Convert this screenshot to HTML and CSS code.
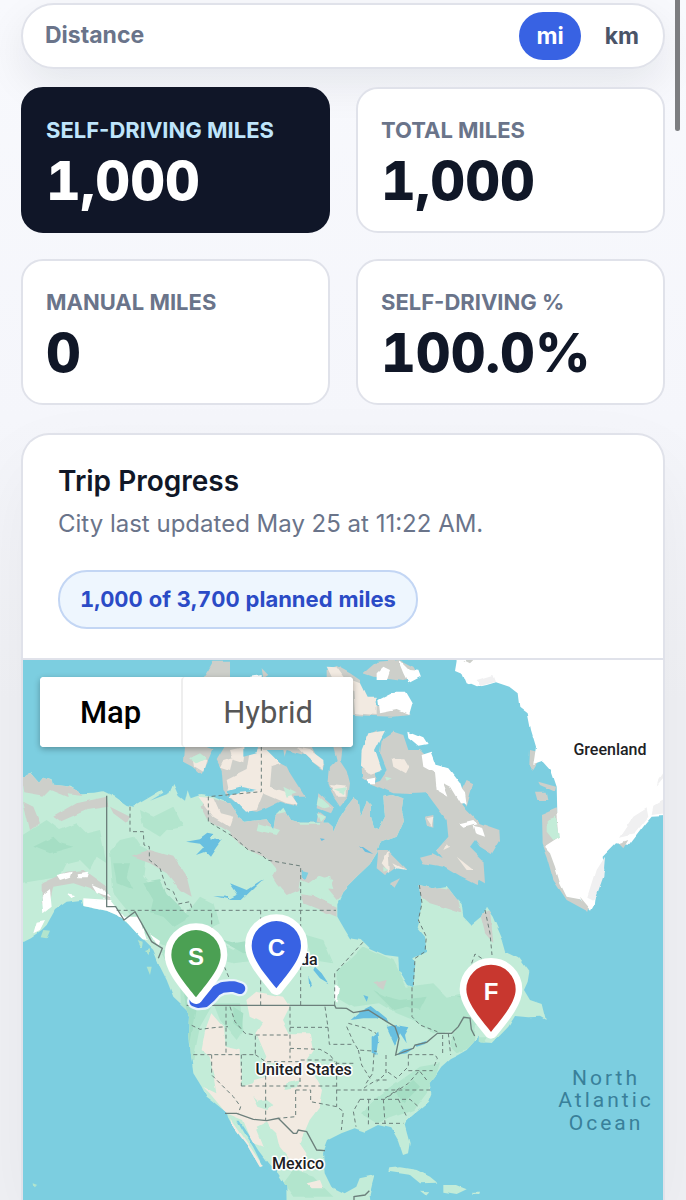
FILE: index.html
```html
<!DOCTYPE html>
<html lang="en">
<head>
<meta charset="utf-8">
<meta name="viewport" content="width=device-width, initial-scale=1">
<title>Trip Progress</title>
<link rel="stylesheet" href="styles.css">
</head>
<body>
<main class="page">
  <section class="units" aria-label="Distance units">
    <span class="units-label">Distance</span>
    <div class="units-toggle">
      <button class="unit unit-active" type="button" aria-pressed="true">mi</button>
      <button class="unit" type="button" aria-pressed="false">km</button>
    </div>
  </section>

  <section class="stats" aria-label="Mileage">
    <article class="stat stat-dark"><h2 class="stat-label">Self-driving miles</h2><p class="stat-value">1,000</p></article>
    <article class="stat"><h2 class="stat-label">Total miles</h2><p class="stat-value">1,000</p></article>
    <article class="stat"><h2 class="stat-label">Manual miles</h2><p class="stat-value">0</p></article>
    <article class="stat"><h2 class="stat-label">Self-driving %</h2><p class="stat-value">100.0%</p></article>
  </section>

  <section class="trip">
    <header class="trip-head">
      <h1 class="trip-title">Trip Progress</h1>
      <p class="trip-sub">City last updated May 25 at 11:22 AM.</p>
      <p class="trip-chip">1,000 of 3,700 planned miles</p>
    </header>
    <div class="map">
      <svg class="map-art" viewBox="69 30 1920 1620" preserveAspectRatio="xMidYMin slice" role="img" aria-label="Route map of North America">
        <defs>
          <filter id="rough" x="0" y="0" width="100%" height="100%">
            <feTurbulence type="fractalNoise" baseFrequency="0.02" numOctaves="2" seed="4" result="n"/>
            <feDisplacementMap in="SourceGraphic" in2="n" scale="11" xChannelSelector="R" yChannelSelector="G"/>
          </filter>
          <clipPath id="landclip"><use href="#mainland"/></clipPath>
          <path id="mainland" d="M40 400 95 367 120 395 132 380 155 388 158 404 215 410 245 430 285 428 310 424 345 440 380 465 400 470 440 447 485 420 490 428 450 452 508 430 520 402 536 438 555 452 563 418 572 445 600 435 640 440 690 462 715 500 735 515 800 508 820 540 826 500 850 476 870 510 900 518 985 518 998 530 1000 545 1018 505 1040 470 1060 445 1076 455 1082 500 1095 470 1100 452 1112 465 1113 500 1122 530 1136 538 1155 500 1150 440 1175 435 1210 445 1205 480 1212 510 1190 560 1140 578 1130 610 1110 642 1070 680 1030 720 1012 760 1012 800 1035 840 1050 865 1085 870 1110 895 1155 915 1195 920 1197 960 1224 1005 1240 1012 1246 940 1240 925 1279 905 1275 860 1250 830 1262 780 1266 740 1258 705 1300 715 1340 708 1368 745 1385 762 1390 800 1413 825 1443 800 1458 770 1478 800 1508 870 1518 905 1558 925 1588 965 1583 995 1572 1020 1590 1050 1625 1062 1637 1110 1620 1100 1585 1102 1545 1098 1525 1130 1475 1182 1440 1180 1436 1160 1400 1200 1374 1215 1349 1228 1324 1250 1304 1280 1288 1300 1294 1330 1284 1355 1254 1380 1219 1410 1214 1425 1229 1480 1224 1510 1209 1515 1194 1470 1174 1435 1134 1425 1094 1445 1064 1435 1024 1450 984 1470 969 1510 974 1570 994 1610 1034 1630 1069 1610 1079 1585 1124 1575 1116 1605 1109 1635 1114 1680 860 1680 859 1610 834 1570 804 1540 774 1500 744 1450 719 1412 712 1412 734 1450 759 1490 788 1548 780 1552 744 1490 700 1432 684 1402 680 1388 640 1355 620 1340 605 1310 580 1270 572 1210 568 1150 570 1100 560 1078 520 1040 500 990 480 950 460 900 420 860 385 822 350 795 320 782 250 768 245 750 200 755 165 780 140 825 125 840 90 865 69 875 40 880Z"/>
          <path id="pin" d="M0 93C-27 58-74 8-74-35A74 74 0 0 1 74-35C74 8 27 58 0 93Z"/>
        </defs>
        <rect class="sea" x="0" y="0" width="2100" height="1700"/>

        <g filter="url(#rough)">
          <rect x="0" y="0" width="2100" height="1700" fill="none"/>
          <use href="#mainland" class="green"/>
          <g clip-path="url(#landclip)">
            <!-- forest shading -->
            <g class="forest">
              <path d="M60 560 140 510 180 540 230 520 260 550 300 540 320 640 290 620 270 660 240 630 200 640 180 680 120 690 60 700ZM330 600 360 570 400 560 420 590 440 600 430 680 480 740 560 790 600 740 640 760 660 820 600 850 700 900 740 870 790 870 860 910 830 960 780 930 700 940 660 930 620 960 520 900 430 850 380 780 340 730ZM480 900 600 900 620 950 640 990 620 1020 640 1060 600 1130 580 1230 550 1240 540 1000ZM640 1060 720 1060 730 1140 710 1170 660 1110ZM1010 960 1050 930 1090 890 1180 930 1220 1010 1300 1000 1340 1040 1390 1030 1420 1010 1480 1020 1540 1060 1480 1110 1380 1140 1300 1150 1240 1110 1190 1090 1140 1060 1060 1070 1010 1040ZM1120 1350 1190 1300 1260 1250 1320 1240 1300 1300 1240 1380 1130 1420 1080 1390ZM1360 1150 1430 1110 1420 1190 1370 1210 1350 1190ZM420 480 460 500 520 470 550 530 500 540 480 560 430 530ZM900 850 970 870 1000 940 940 930ZM880 1560 940 1580 1000 1640 880 1640 850 1600Z"/>
            </g>
            <g class="forest-deep">
              <path d="M430 700 480 690 500 730 530 760 570 800 520 830 490 800 450 790 460 750ZM540 960 590 960 620 1040 590 1080 570 1180 560 1080ZM660 870 700 880 760 870 800 900 730 910ZM1120 1020 1160 1040 1200 1050 1280 1040 1260 1080 1220 1070 1180 1080ZM1190 1330 1240 1290 1260 1310 1210 1360ZM100 590 160 560 180 580 220 590 150 610ZM340 640 390 640 380 680 400 720 350 700ZM700 1070 730 1090 725 1140 700 1120ZM1370 1040 1450 1020 1430 1050Z"/>
            </g>
            <!-- barren ground -->
            <path class="gray" d="M700 465 735 515 900 480 1010 440 1230 420 1220 560 1140 620 1070 680 1020 740 1010 750 985 720 1000 690 960 675 925 700 900 690 895 720 860 735 830 700 818 680 830 660 800 625 745 600 700 565 684 545 625 510 605 470 620 440Z"/>
            <path class="gray" d="M900 730 940 735 1010 770 1010 800 960 780 910 760ZM60 370 130 370 165 400 240 420 250 435 200 440 150 420 130 440 70 430ZM160 500 230 460 320 440 325 470 260 480 180 515ZM70 455 100 470 120 520 90 540ZM395 620 450 600 520 620 560 680 575 740 540 720 500 670 450 640ZM125 700 200 665 250 660 320 710 330 760 280 720 220 700 160 710 145 780 125 760ZM330 470 390 500 380 520 340 490ZM1250 700 1368 720 1384 790 1340 775 1290 760 1265 740ZM1440 790 1470 780 1480 880 1455 850ZM1120 1000 1160 990 1150 1020Z"/>
            <path class="green" d="M940 690 990 675 1000 720 950 715ZM775 520 840 540 830 555 770 540ZM890 515 960 518 960 524 900 524ZM200 430 250 435 240 450 205 445Z"/>
            <path class="sand" d="M595 440 640 445 660 490 700 500 690 530 640 500ZM614 1150 619 1130 634 1090 669 1130 674 1190 719 1200 724 1310 759 1300 799 1220 769 1150 789 1120 749 1100 739 1050 769 1025 849 1040 869 1070 849 1110 869 1150 929 1150 939 1200 919 1230 969 1320 959 1370 929 1410 899 1480 919 1510 909 1570 879 1540 839 1490 829 1450 809 1430 769 1440 789 1490 759 1480 729 1410 679 1390 629 1330 609 1310 649 1330 639 1270 629 1220 605 1200ZM920 1600 960 1590 970 1615 935 1615ZM690 1405 715 1440 750 1490 790 1550 770 1550 700 1440Z"/>
            <path class="green" d="M760 1340 775 1355 800 1350 820 1365 805 1380 775 1370ZM770 1430 800 1415 830 1470 840 1500 800 1490ZM860 1300 900 1290 890 1315 850 1320ZM910 1480 940 1450 960 1500 930 1520ZM760 1260 790 1240 830 1235 800 1280 765 1290Z"/>
            <path class="snow" d="M125 740 150 720 155 770 130 790ZM170 675 215 665 210 680 180 690ZM230 670 265 665 260 682 232 682ZM250 745 330 750 370 800 420 800 440 870 400 860 380 815 320 785 250 770ZM110 815 135 810 120 840 100 850ZM275 705 310 720 330 745 290 730ZM1005 1005 1020 1015 1012 1055 1002 1045ZM450 850 480 870 475 890ZM200 730 225 735 215 745Z"/>
          </g>

          <!-- arctic islands -->
          <path class="gray" d="M640 32 690 32 690 90 605 90 625 60ZM555 290 590 275 640 295 620 340 605 372 580 350 552 335ZM650 330 680 280 930 285 930 320 860 300 850 330 870 370 915 440 880 440 895 470 840 455 800 475 770 485 740 480 720 465 690 445 670 420 665 360ZM785 55 805 75 790 85ZM980 60 1010 48 1050 70 1080 90 1080 170 1170 170 1230 195 1180 200 1120 198 1060 195 980 120ZM1090 70 1130 35 1200 30 1240 50 1255 75 1210 90 1170 85 1120 80ZM1000 290 1025 290 1020 330 1040 360 1050 400 1045 440 1020 470 1000 440 985 400 990 350 1010 330ZM890 290 935 290 960 340 975 345 970 362 930 330ZM955 430 1000 470 990 490 950 475ZM1085 310 1100 260 1135 240 1110 300 1130 380 1120 405 1090 385ZM1145 270 1180 245 1210 255 1225 300 1260 300 1300 340 1340 380 1370 440 1400 480 1440 520 1498 540 1500 570 1475 612 1440 590 1425 570 1410 590 1450 630 1455 700 1420 680 1380 650 1340 640 1310 600 1345 560 1340 510 1310 470 1280 430 1230 432 1180 430 1110 400 1140 390 1160 360 1140 310ZM955 485 975 500 970 520 950 515ZM1135 600 1160 600 1220 660 1190 650 1155 675 1130 655ZM1170 700 1200 685 1185 710ZM1260 620 1300 610 1340 630 1440 680 1430 705 1380 680 1330 650 1270 640ZM1275 500 1300 495 1300 530 1280 525ZM1400 390 1420 400 1400 470 1380 430Z"/>
          <path class="sand" d="M680 390 740 360 750 300 840 300 850 340 815 350 810 410 870 430 895 465 860 460 790 430 770 480 735 485 690 440ZM690 300 735 290 730 340 700 330ZM890 292 930 300 970 330 972 360 930 330ZM980 50 1010 52 1030 80 1080 100 1100 140 1130 140 1130 195 1065 190 1060 120 1000 90ZM1085 300 1105 250 1155 242 1125 300 1145 360 1110 372 1083 350ZM1175 325 1210 325 1225 350 1215 370 1180 350ZM990 405 1040 410 1040 440 1010 440ZM580 320 620 330 610 365 585 350ZM670 330 700 320 690 360 660 350ZM1280 505 1300 500 1295 528ZM1145 640 1165 600 1170 670ZM1180 640 1220 660 1190 655ZM1340 580 1350 590 1330 600ZM1370 620 1420 660 1400 660Z"/>
          <path class="green" d="M570 325 600 310 620 325 590 340ZM955 440 990 470 970 475 950 465ZM1000 420 1040 415 1035 435ZM950 490 975 500 960 515ZM1150 650 1165 660 1150 665ZM850 410 890 430 860 440ZM1155 380 1175 385 1160 392Z"/>
          <path class="snow" d="M1200 30 1230 60 1255 62 1262 80 1225 100 1210 70 1200 45ZM1130 70 1150 50 1170 60 1160 90 1130 90ZM1135 150 1185 125 1215 125 1235 160 1225 195 1190 180 1140 190ZM1222 245 1270 265 1283 285 1255 290 1225 265ZM1265 315 1295 305 1310 345 1345 355 1380 400 1400 460 1380 460 1350 410 1330 400 1345 440 1310 420 1305 370 1270 350ZM1368 395 1395 430 1400 465 1380 450ZM1378 520 1420 510 1430 520 1390 530ZM1418 525 1445 530 1455 560 1425 550ZM1100 385 1125 380 1125 400 1105 400ZM1370 30 1430 30 1430 45 1400 60ZM750 80 785 75 785 90 755 90Z"/>
          <path class="forest" d="M130 840 150 842 140 865 122 862ZM440 950 455 950 450 975ZM435 900 450 895 450 915ZM410 870 425 875 422 895ZM98 1600 112 1605 100 1612ZM1436 1165 1460 1165 1450 1182 1436 1178Z"/>
          <path class="green" d="M1168 1555 1200 1552 1250 1560 1290 1580 1312 1598 1260 1600 1230 1575 1165 1565ZM1330 1605 1368 1605 1400 1618 1370 1632 1330 1625ZM1420 1628 1440 1628 1438 1635 1420 1634ZM1260 1622 1285 1624 1275 1634Z"/>

          <!-- greenland -->
          <path class="gray" d="M1590 300 1630 310 1600 360 1588 350ZM1615 395 1668 410 1665 425 1620 405ZM1608 425 1640 425 1645 450 1615 450ZM1623 495 1670 475 1700 600 1740 750 1770 765 1765 785 1700 750 1660 690 1640 620 1625 580Z"/>
          <path class="snow" d="M1375 0H2060V495L1955 500 1938 520 1888 585 1848 580 1808 620 1813 660 1793 700 1785 760 1773 782 1740 748 1700 740 1680 700 1665 650 1650 610 1632 590 1678 560 1672 490 1670 410 1655 365 1628 335 1600 345 1608 290 1593 240 1583 190 1558 170 1553 130 1528 110 1488 97 1460 105 1428 112 1400 100 1388 70 1365 60Z"/>
          <path class="green" d="M1640 510 1668 500 1680 560 1660 570 1640 545Z"/>
          <path class="ice" d="M1430 90 1480 75 1488 95 1440 108ZM1900 500 1940 475 1945 500 1905 550 1860 560ZM1960 470 1995 450 1995 490 1955 495ZM1975 390 1995 360 1995 380 1970 410ZM1790 660 1815 620 1810 680 1785 750 1765 740Z"/>
          <path class="gray" d="M1855 580 1885 570 1870 595ZM1740 740 1765 770 1755 775ZM1390 30 1420 30 1410 40Z"/>

          <!-- inland water -->
          <path class="sea" d="M730 285 775 290 770 310 730 320ZM684 420 720 410 770 420 720 425 684 440ZM800 300 850 300 860 350 840 340ZM905 660 925 665 915 690 905 680Z"/>
          <path class="lake" d="M558 572 600 565 622 548 640 552 630 568 665 570 650 590 630 620 615 605 588 615 612 590 600 578ZM686 750 715 735 690 700 740 720 790 688 750 725 725 750ZM945 950 965 970 985 1000 960 985 940 960ZM925 980 935 1000 928 1010ZM1052 1110 1080 1085 1115 1068 1160 1105 1165 1120 1130 1105 1090 1105ZM1115 1160 1135 1145 1138 1170 1132 1215 1115 1208ZM1160 1130 1190 1125 1228 1132 1215 1155 1220 1180 1200 1150 1185 1185ZM1187 1215 1210 1198 1240 1195 1220 1210ZM1244 1185 1280 1172 1275 1182 1250 1190ZM1090 1035 1105 1040 1100 1055ZM1080 585 1110 605 1120 612 1095 605ZM960 565 975 567 965 573ZM640 738 684 740 684 748Z"/>
        </g>

        <path class="country" d="M320 437V770H347L372 810 405 785 425 820 455 875 487 895 475 925M560 1066H1004L1008 1074 1040 1075 1060 1088 1105 1080 1160 1115 1185 1130 1197 1165 1187 1215 1240 1195 1245 1185 1280 1177 1312 1150H1355L1375 1130 1391 1102 1410 1104 1414 1138 1424 1158M675 1390H710L760 1408 800 1412 835 1405 880 1450H890L895 1440 920 1445 950 1500 975 1502M1062 1680V1640L1095 1635 1108 1622"/>
        <path class="state" d="M390 470V545H430L432 585 448 590V630L480 655 500 715 520 725 535 762 570 755 577 781M350 781H1008M784 290V425L625 440V515L700 560 745 600 780 608 800 630 902 648V1066M635 790V860L690 990M782 781V1066M1004 1066V970L1095 870M1236 1012V1100L1260 1125 1312 1145M1258 705 1266 760 1255 810 1279 860 1275 905 1245 925 1240 1005M1455 780 1470 850 1476 915M1415 940 1425 912 1445 925M575 1126 600 1138 650 1132 684 1130M678 1070V1214M580 1214H766V1155M690 1070 705 1115 735 1150 766 1155H870M870 1070V1225M870 1132H984M635 1214V1275L700 1340 722 1370 715 1390M724 1214V1308M797 1235V1410M766 1214 797 1235H900V1308M724 1308H1010M870 1195 960 1198 990 1215 1005 1235M975 1070 984 1132 988 1183H1060M902 1230H1000M887 1320V1400L835 1405M887 1320H932V1355L1010 1370 1030 1384 1024 1440M1010 1235V1320 1370M1010 1320H1085L1100 1308 1130 1290 1160 1290M1040 1130 1060 1175 1075 1200 1130 1204M1060 1240H1005M1075 1200 1085 1245 1110 1285M1122 1210 1118 1270 1095 1305M1158 1215V1270L1130 1295M1225 1214V1250L1190 1285 1155 1260M1225 1214H1305L1312 1225 1300 1255M1225 1262H1298M1165 1340 1225 1300 1258 1262 1280 1290M1090 1320H1290M1080 1348H1230L1255 1370M1080 1348 1060 1384 1068 1430M1106 1348 1105 1430M1150 1348 1155 1420M1195 1348 1220 1400M1125 1420H1210M1155 1345 1205 1310M1328 1155V1210M1345 1150 1352 1215M1360 1160 1372 1200M1045 1120 1100 1135 1128 1150"/>

        <path class="route-case" d="M584 1054 594 1058 614 1056 632 1040 648 1022 668 1012 690 1010 702 1010 720 1016"/>
        <path class="route" d="M584 1054 594 1058 614 1056 632 1040 648 1022 668 1012 690 1010 702 1010 720 1016"/>

        <g class="place">
          <text x="1830" y="314">Greenland</text>
          <text x="953" y="945" class="place-end">da</text>
          <text x="911" y="1275">United States</text>
          <text x="894" y="1556">Mexico</text>
        </g>
        <g class="ocean">
          <text x="1818" y="1304">North</text>
          <text x="1818" y="1372">Atlantic</text>
          <text x="1818" y="1440">Ocean</text>
        </g>

        <g class="pins">
          <g transform="translate(588 949)"><use href="#pin" class="pin-s"/><text y="-4">S</text></g>
          <g transform="translate(829 922)"><use href="#pin" class="pin-c"/><text y="-4">C</text></g>
          <g transform="translate(1473 1053)"><use href="#pin" class="pin-f"/><text y="-4">F</text></g>
        </g>
      </svg>
      <div class="map-types">
        <button class="map-type map-type-active" type="button" aria-pressed="true">Map</button>
        <button class="map-type" type="button" aria-pressed="false">Hybrid</button>
      </div>
    </div>
  </section>
</main>
<div class="scroll-thumb" aria-hidden="true"></div>
</body>
</html>
```

FILE: styles.css
```css
* { box-sizing: border-box; }

body {
  margin: 0;
  background: linear-gradient(#f8f9fd, #f5f6fb 420px, #f0f1f5 700px);
  color: #101727;
  font-family: Inter, "Liberation Sans", sans-serif;
}

h1, h2, p { margin: 0; }
button { border: 0; font: inherit; cursor: pointer; }

.page {
  display: flex;
  flex-direction: column;
  height: 100vh;
  min-height: 900px;
  padding: 3px 21px 0;
  overflow: hidden;
}

.units {
  display: flex;
  align-items: center;
  justify-content: space-between;
  flex: none;
  padding: 7px 7px 7px 22px;
  border: 2px solid #e0e2ea;
  border-radius: 34px;
  background: #fff;
  box-shadow: 0 16px 40px rgba(16, 23, 39, 0.08);
}

.units-label {
  padding-bottom: 3px;
  color: #6a748a;
  font-size: 23px;
  font-weight: 700;
}

.units-toggle { display: flex; gap: 7px; }

.unit {
  height: 48px;
  padding: 0 17px;
  border-radius: 24px;
  background: transparent;
  color: #4a5468;
  font-size: 23px;
  font-weight: 700;
}

.unit-active { background: #3862e3; color: #fff; }

.stats {
  display: grid;
  grid-template-columns: 1fr 1fr;
  flex: none;
  gap: 26px;
  margin-top: 18px;
}

.stat {
  padding: 28px 23px 20px;
  border: 2px solid #e0e2ea;
  border-radius: 22px;
  background: #fff;
}

.stat-dark { border-color: #101628; background: #101628; color: #fff; }

.stat-label {
  color: #6a748a;
  font-size: 22px;
  font-weight: 700;
  line-height: 26px;
  text-transform: uppercase;
  white-space: nowrap;
}

.stat-dark .stat-label { color: #bfe5fb; }

.stat-value {
  margin-top: 8px;
  font-size: 54px;
  font-weight: 800;
  line-height: 60px;
  font-variant-numeric: tabular-nums;
}

.trip {
  display: flex;
  flex: 1;
  flex-direction: column;
  min-height: 0;
  margin-top: 28px;
  border: 2px solid #e0e2ea;
  border-bottom: 0;
  border-radius: 28px 28px 0 0;
  background: #fff;
  box-shadow: 0 32px 80px rgba(16, 23, 39, 0.05);
}

.trip-head {
  padding: 29px 35px;
  border-bottom: 2px solid #e0e2ea;
}

.trip-title {
  font-size: 28px;
  font-weight: 600;
  line-height: 34px;
}

.trip-sub {
  margin-top: 10px;
  color: #6a748a;
  font-size: 24px;
  line-height: 32px;
}

.trip-chip {
  width: fit-content;
  margin-top: 30px;
  padding: 13px 20px 14px;
  border: 2px solid #c3d6f4;
  border-radius: 29px;
  background: #eef6fe;
  color: #2b4bc6;
  font-size: 22px;
  font-weight: 700;
  line-height: 28px;
  font-variant-numeric: tabular-nums;
}

.map {
  position: relative;
  flex: 1;
  min-height: 0;
  overflow: hidden;
  font-family: Roboto, "Liberation Sans", sans-serif;
}

.map-art { display: block; width: 100%; height: 100%; }

.map-types {
  position: absolute;
  top: 17px;
  left: 17px;
  display: flex;
  border-radius: 4px;
  background: #fff;
  box-shadow: 0 2px 6px rgba(0, 0, 0, 0.3);
}

.map-type {
  height: 70px;
  padding: 0 40px;
  border-radius: 4px;
  background: #fff;
  color: #565656;
  font-size: 31px;
}

.map-type-active { color: #000; font-weight: 500; }
.map-type + .map-type { border-left: 2px solid #eee; }

.sea { fill: #7ccee0; }
.green { fill: #c3ecd8; }
.forest { fill: #b2e5cd; }
.forest-deep { fill: #a5dec4; }
.gray { fill: #cdcfca; }
.sand { fill: #f2eae1; }
.snow { fill: #fff; }
.ice { fill: #f0f0f1; }
.lake { fill: #68bfe0; }

.country, .state { fill: none; stroke: #6c7f7b; stroke-width: 4; }
.state { stroke-width: 3; stroke-dasharray: 12 9; }

.route-case, .route {
  fill: none;
  stroke: #e8f4fb;
  stroke-width: 46;
  stroke-linecap: round;
  stroke-linejoin: round;
}
.route { stroke: #3862e3; stroke-width: 32; }

.place text {
  fill: #202124;
  stroke: #fff;
  stroke-width: 9;
  stroke-linejoin: round;
  paint-order: stroke;
  font-size: 48px;
  font-weight: 500;
  text-anchor: middle;
}
.place .place-end { text-anchor: end; }

.ocean text {
  fill: #39809a;
  font-size: 63px;
  letter-spacing: 9px;
  text-anchor: middle;
}

.pins use {
  stroke: #fff;
  stroke-width: 40;
  stroke-linejoin: round;
  paint-order: stroke;
}
.pins text {
  fill: #fff;
  font-family: "Liberation Sans", Arial, sans-serif;
  font-size: 72px;
  font-weight: 700;
  text-anchor: middle;
}
.pin-s { fill: #4ba053; }
.pin-c { fill: #3862e3; }
.pin-f { fill: #c8372f; }

.scroll-thumb {
  position: fixed;
  top: -20px;
  right: 6px;
  width: 5px;
  height: 151px;
  border-radius: 3px;
  background: #7c7d80;
}
```
